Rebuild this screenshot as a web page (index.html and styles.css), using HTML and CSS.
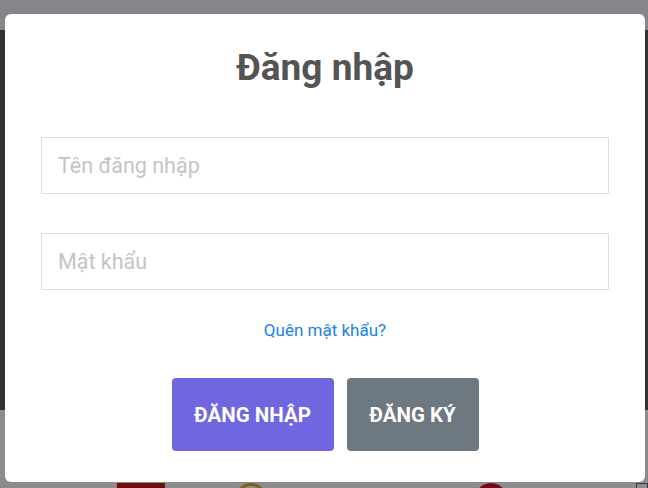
FILE: index.html
```html
<!DOCTYPE html>
<html lang="vi">
<head>
    <meta charset="UTF-8">
    <meta name="viewport" content="width=device-width, initial-scale=1.0">
    <title>Đăng nhập</title>
    <link rel="stylesheet" href="styles.css">
</head>
<body>
    <!-- page behind the dialog -->
    <div class="page">
        <div class="topbar"></div>
        <div class="banner"></div>
        <div class="footer">
            <span class="logo logo-red"></span>
            <span class="logo logo-gold"></span>
            <span class="logo logo-heart"></span>
            <span class="logo logo-qr"></span>
        </div>
    </div>
    <div class="backdrop"></div>

    <!-- login dialog -->
    <div class="modal">
        <h2 class="modal-title">Đăng nhập</h2>
        <form class="login-form">
            <input class="field" type="text" placeholder="Tên đăng nhập">
            <input class="field" type="password" placeholder="Mật khẩu">
            <a class="forgot" href="#">Quên mật khẩu?</a>
            <div class="actions">
                <button type="button" class="btn btn-login">Đăng nhập</button>
                <button type="button" class="btn btn-register">Đăng ký</button>
            </div>
        </form>
    </div>
</body>
</html>
```

FILE: styles.css
```css
body {
    margin: 0;
    overflow: hidden;
    font-family: Roboto, "Liberation Sans", Arial, sans-serif;
}
.page {
    display: flex;
    flex-direction: column;
    height: 488px;
    background: #f0f0f0;
}
.topbar {
    height: 30px;
    background: #e4e7ee;
}
.banner {
    height: 380px;
    background: #555;
}
.footer {
    flex: 1;
    position: relative;
    overflow: hidden;
    background: #f2f2f2;
}
.logo {
    position: absolute;
    top: 73px;
}
.logo-red {
    left: 117px;
    width: 48px;
    height: 6px;
    background: #c4161c;
}
.logo-gold {
    left: 235px;
    width: 26px;
    height: 26px;
    border-radius: 50%;
    border: 3px solid #d4a53a;
}
.logo-heart {
    left: 478px;
    width: 26px;
    height: 18px;
    border-radius: 50%;
    background: #c8102e;
}
.logo-qr {
    left: 636px;
    width: 10px;
    height: 8px;
    border: 1px solid #4a6a9a;
}
.backdrop {
    position: fixed;
    inset: 0;
    background: rgba(0, 0, 0, 0.42);
}
.modal {
    position: fixed;
    top: 14px;
    left: 5px;
    width: 640px;
    height: 468px;
    box-sizing: border-box;
    padding: 30px 36px 32px 36px;
    background: #fff;
    border-radius: 6px;
    display: flex;
    flex-direction: column;
    align-items: center;
}
.modal-title {
    margin: 0;
    font-size: 37px;
    line-height: 48px;
    font-weight: 700;
    color: #545454;
}
.login-form {
    width: 100%;
    display: flex;
    flex-direction: column;
    align-items: center;
    margin-top: 45px;
}
.field {
    width: 100%;
    height: 57px;
    box-sizing: border-box;
    padding: 0 16px;
    border: 1px solid #dcdcdc;
    border-radius: 1px;
    font-family: Roboto, "Liberation Sans", Arial, sans-serif;
    font-size: 21.5px;
    color: #545454;
    outline: none;
}
.field + .field {
    margin-top: 39px;
}
.field::placeholder {
    color: #c4c4c4;
}
.forgot {
    margin-top: 28px;
    font-size: 17px;
    line-height: 24px;
    color: #1a82e2;
    text-decoration: none;
}
.actions {
    display: flex;
    gap: 13px;
    margin-top: 36px;
}
.btn {
    height: 73px;
    padding: 0 18px;
    border: 0;
    border-radius: 4px;
    font-family: Roboto, "Liberation Sans", Arial, sans-serif;
    font-size: 20.5px;
    font-weight: 700;
    text-transform: uppercase;
    color: #fff;
}
.btn-login {
    width: 162px;
    background: #7066e0;
}
.btn-register {
    width: 132px;
    background: #6e7881;
}
```
